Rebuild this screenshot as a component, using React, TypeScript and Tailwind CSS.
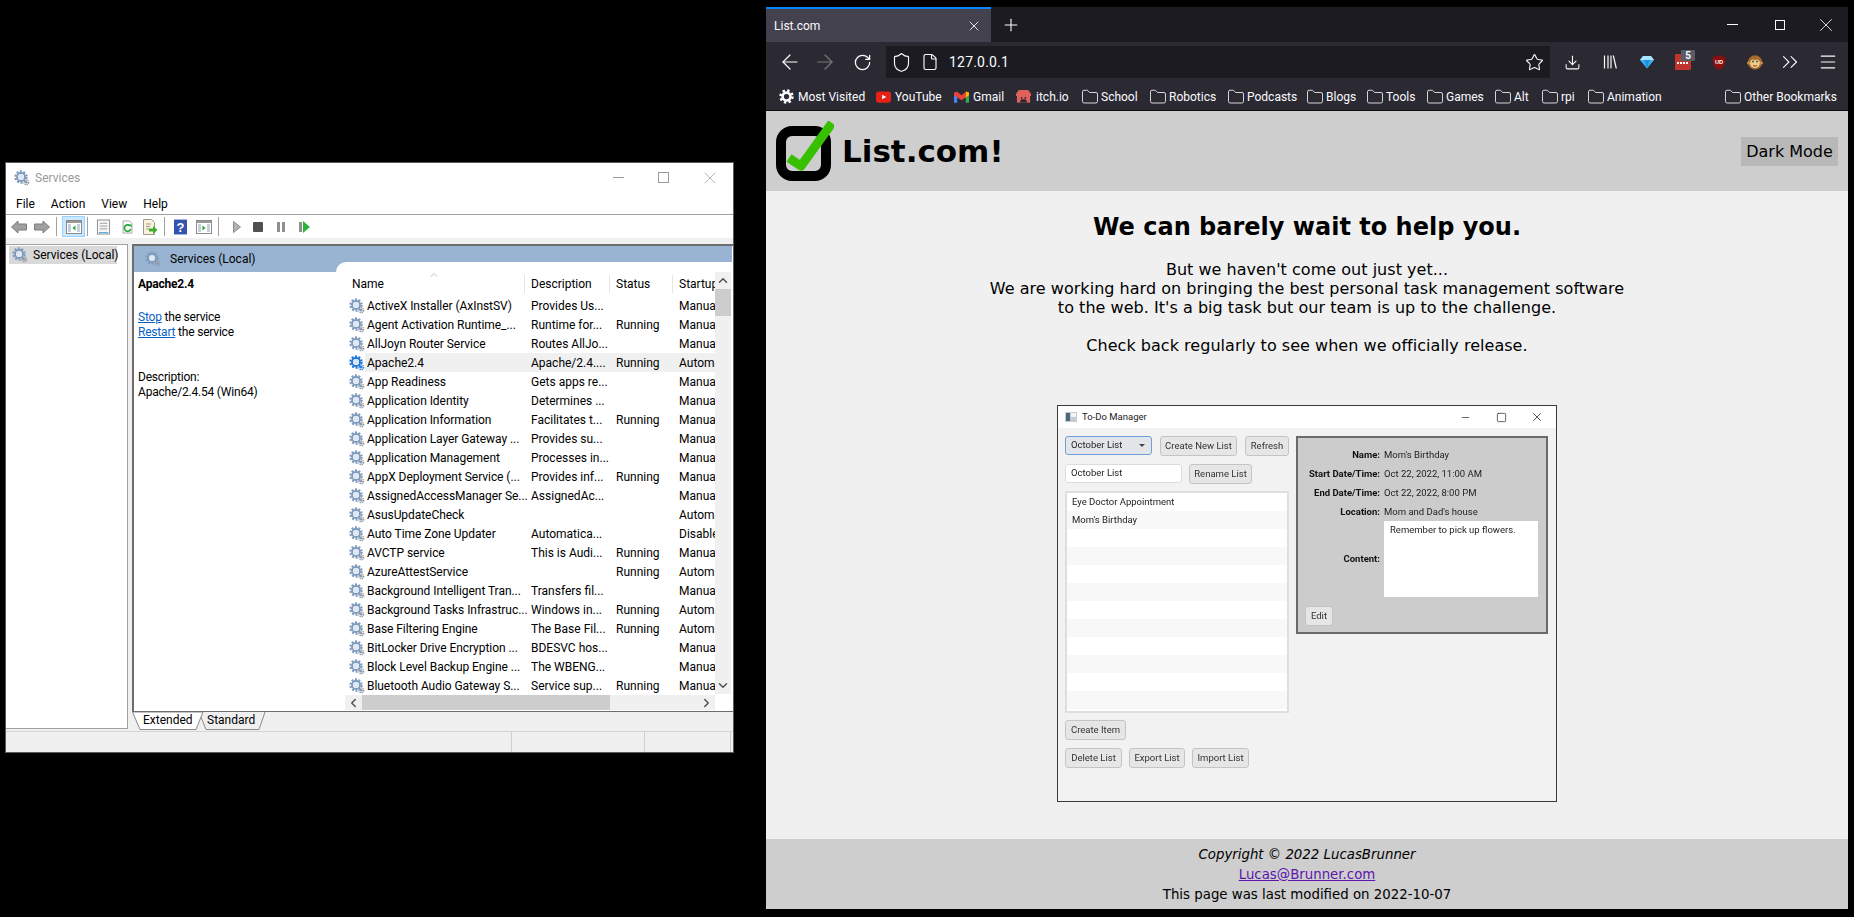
import {
  ArrowLeft,
  ArrowRight,
  ChevronDown,
  ChevronLeft,
  ChevronRight,
  ChevronUp,
  ChevronsRight,
  Download,
  File,
  Folder,
  Menu,
  Minus,
  Plus,
  RotateCw,
  Shield,
  Square,
  Star,
  X,
} from 'lucide-react'

const services = [
  ['ActiveX Installer (AxInstSV)', 'Provides Us...', '', 'Manual'],
  ['Agent Activation Runtime_...', 'Runtime for...', 'Running', 'Manual'],
  ['AllJoyn Router Service', 'Routes AllJo...', '', 'Manual'],
  ['Apache2.4', 'Apache/2.4....', 'Running', 'Automatic'],
  ['App Readiness', 'Gets apps re...', '', 'Manual'],
  ['Application Identity', 'Determines ...', '', 'Manual'],
  ['Application Information', 'Facilitates t...', 'Running', 'Manual'],
  ['Application Layer Gateway ...', 'Provides su...', '', 'Manual'],
  ['Application Management', 'Processes in...', '', 'Manual'],
  ['AppX Deployment Service (...', 'Provides inf...', 'Running', 'Manual'],
  ['AssignedAccessManager Se...', 'AssignedAc...', '', 'Manual'],
  ['AsusUpdateCheck', '', '', 'Automatic'],
  ['Auto Time Zone Updater', 'Automatica...', '', 'Disabled'],
  ['AVCTP service', 'This is Audi...', 'Running', 'Manual'],
  ['AzureAttestService', '', 'Running', 'Automatic'],
  ['Background Intelligent Tran...', 'Transfers fil...', '', 'Manual'],
  ['Background Tasks Infrastruc...', 'Windows in...', 'Running', 'Automatic'],
  ['Base Filtering Engine', 'The Base Fil...', 'Running', 'Automatic'],
  ['BitLocker Drive Encryption ...', 'BDESVC hos...', '', 'Manual'],
  ['Block Level Backup Engine ...', 'The WBENG...', '', 'Manual'],
  ['Bluetooth Audio Gateway S...', 'Service sup...', 'Running', 'Manual'],
]

const folders = [
  ['School', 'w-[68px]'],
  ['Robotics', 'w-[78px]'],
  ['Podcasts', 'w-[79px]'],
  ['Blogs', 'w-[60px]'],
  ['Tools', 'w-[60px]'],
  ['Games', 'w-[68px]'],
  ['Alt', 'w-[47px]'],
  ['rpi', 'w-[46px]'],
  ['Animation', 'w-[137px]'],
]

function Gear({ active = false, className = '' }: { active?: boolean; className?: string }) {
  const main = active ? '#1f74d6' : '#7e9abc'
  const small = active ? '#2f80dc' : '#8f9ba8'
  return (
    <svg viewBox="0 0 16 16" className={className}>
      <circle cx="7" cy="7" r="5.6" fill="none" stroke={main} strokeWidth="2.2" strokeDasharray="2 1.52" />
      <circle cx="7" cy="7" r="4" fill="none" stroke={main} strokeWidth="1.8" />
      <circle cx="7" cy="7" r="3" fill={active ? '#d6e6f8' : '#dfe8f2'} />
      <circle cx="12.3" cy="12.3" r="2.4" fill="none" stroke={small} strokeWidth="1.4" strokeDasharray="1.2 0.7" />
      <circle cx="12.3" cy="12.3" r="1.3" fill={small} />
    </svg>
  )
}

function MmcPaneIcon({ play = 'left' }: { play?: 'left' | 'right' }) {
  return (
    <svg viewBox="0 0 16 16" className="h-4 w-4">
      <rect x="0.5" y="1.5" width="15" height="13" fill="#fff" stroke="#8a8a8a" />
      <rect x="1" y="2" width="14" height="2" fill="#9a9a9a" />
      <path d="M2 6h3M2 8h3M2 10h3M2 12h3M11 6h3M11 8h3M11 10h3M11 12h3" stroke="#8fa0b3" />
      {play === 'left' ? <path d="M9.5 6.5v5l-3-2.5z" fill="#2aa53a" /> : <path d="M6.5 6.5v5l3-2.5z" fill="#2aa53a" />}
    </svg>
  )
}

function ServicesToolbar() {
  return (
    <div className="flex h-[23px] items-center bg-white pl-[5px]">
      <svg viewBox="0 0 16 14" className="h-[14px] w-[16px]"><path d="M0.5 7 7 1v3h8.5v6H7v3z" fill="#a0a0a0" stroke="#7c7c7c" /></svg>
      <svg viewBox="0 0 16 14" className="ml-[7px] h-[14px] w-[16px]"><path d="M15.5 7 9 1v3H0.5v6H9v3z" fill="#a0a0a0" stroke="#7c7c7c" /></svg>
      <div className="ml-[6px] h-[19px] w-px bg-[#a0a0a0]" />
      <div className="ml-[5px] flex h-[21px] w-[23px] items-center justify-center border border-[#99d1ff] bg-[#cce8ff]">
        <MmcPaneIcon />
      </div>
      <div className="ml-[2px] h-[19px] w-px bg-[#a0a0a0]" />
      <svg viewBox="0 0 16 16" className="ml-[8px] h-4 w-[15px]">
        <rect x="1.5" y="0.5" width="13" height="15" fill="#f6f6f6" stroke="#8a8a8a" />
        <path d="M4 4h8M4 7h8M4 10h8" stroke="#9a9a9a" />
        <path d="M3 14h10" stroke="#3aa0e0" />
      </svg>
      <svg viewBox="0 0 16 16" className="ml-[10px] h-4 w-[13px]">
        <path d="M2.5 0.5h8l3 3v12h-11z" fill="#fbfbfb" stroke="#9a9a9a" />
        <path d="M11 6.5a4 4 0 1 0 1 4" fill="none" stroke="#22a534" strokeWidth="2" />
        <path d="M9.5 5h3.5v3.5z" fill="#22a534" />
      </svg>
      <svg viewBox="0 0 16 16" className="ml-[8px] h-4 w-4">
        <path d="M1.5 0.5h8l3 3v12h-11z" fill="#fbf3d8" stroke="#9a9a9a" />
        <path d="M4 5h5M4 7.5h4M4 10h3" stroke="#9a9a9a" />
        <path d="M7 9.5h4v-2.5l4.5 4-4.5 4v-2.5h-4z" fill="#3fae2a" />
      </svg>
      <div className="ml-[6px] h-[19px] w-px bg-[#a0a0a0]" />
      <svg viewBox="0 0 14 16" className="ml-[9px] h-4 w-[13px]">
        <rect width="14" height="16" fill="#3554ad" />
        <text x="7" y="13" textAnchor="middle" fontSize="14" fontWeight="700" fill="#fff" fontFamily="Liberation Sans, sans-serif">?</text>
      </svg>
      <div className="ml-[9px]"><MmcPaneIcon play="right" /></div>
      <div className="ml-[6px] h-[19px] w-px bg-[#a0a0a0]" />
      <svg viewBox="0 0 8 12" className="ml-[14px] h-3 w-2"><path d="M0.5 0.5v11l7-5.5z" fill="#b4b4b4" stroke="#8c8c8c" /></svg>
      <div className="ml-[12px] h-[10px] w-[10px] rounded-[1px] bg-[#505050]" />
      <div className="ml-[14px] flex gap-[2px]">
        <div className="h-[10px] w-[3px] bg-[#8f8f8f]" />
        <div className="h-[10px] w-[3px] bg-[#8f8f8f]" />
      </div>
      <div className="ml-[14px] flex items-center gap-[1px]">
        <div className="h-[10px] w-[3px] bg-[#8f8f8f]" />
        <svg viewBox="0 0 7 12" className="h-3 w-[7px]"><path d="M0 0v12l7-6z" fill="#2cb43a" /></svg>
      </div>
    </div>
  )
}

function ServicesWindow() {
  return (
    <div className="absolute left-[5px] top-[162px] flex h-[591px] w-[729px] flex-col border border-[#5a5a5a] bg-[#f0f0f0] text-[12px] text-black [font-family:Roboto,sans-serif]">
      {/* title bar */}
      <div className="flex h-[32px] items-center bg-white pb-[3px] pl-[8px]">
        <Gear className="h-4 w-4" />
        <span className="ml-[5px] text-[#9a9a9a]">Services</span>
        <div className="ml-auto flex items-center pr-[13px] text-[#9a9a9a]">
          <div className="h-px w-[11px] bg-[#9a9a9a]" />
          <div className="ml-[34px] h-[11px] w-[11px] border border-[#9a9a9a]" />
          <X className="ml-[31px] h-[20px] w-[20px]" strokeWidth={0.9} />
        </div>
      </div>
      {/* menu */}
      <div className="flex h-[20px] items-center gap-[16px] border-b border-[#a0a0a0] bg-white pb-[1px] pl-[10px]">
        <span>File</span>
        <span>Action</span>
        <span>View</span>
        <span>Help</span>
      </div>
      <ServicesToolbar />
      <div className="flex min-h-0 flex-1 flex-col pt-[6px]">
        <div className="flex min-h-0 flex-1">
          {/* tree */}
          <div className="w-[122px] border-t border-r border-b border-[#a0a0a0] bg-white pl-[3px] pt-[1px]">
            <div className="flex h-[18px] w-[108px] items-center whitespace-nowrap bg-[#d9d9d9] pl-[3px]">
              <Gear className="h-4 w-4 shrink-0" />
              <span className="ml-[5px]">Services (Local)</span>
            </div>
          </div>
          {/* result pane */}
          <div className="ml-[4px] flex min-w-0 flex-1 flex-col">
            <div className="flex-1 border-t-2 border-l-2 border-[#6d6d6d] bg-white">
              <div className="mr-[1px] flex h-[26px] items-center bg-[#98b4d2] pl-[11px]">
                <Gear className="h-4 w-4" />
                <span className="ml-[9px]">Services (Local)</span>
              </div>
              <div className="flex">
                <div className="w-[202px] pl-[4px] tracking-[-0.2px]">
                  <div className="mt-[3px] font-bold leading-[19px]">Apache2.4</div>
                  <div className="mt-[16px] leading-[15px]">
                    <span className="text-[#0a5fc4] underline">Stop</span> the service
                  </div>
                  <div className="leading-[15px]">
                    <span className="text-[#0a5fc4] underline">Restart</span> the service
                  </div>
                  <div className="mt-[30px] leading-[15px]">Description:</div>
                  <div className="leading-[15px]">Apache/2.4.54 (Win64)</div>
                </div>
                {/* list view */}
                <div className="relative -mt-[10px] min-w-0 flex-1 rounded-tl-[10px] bg-white pl-[9px]">
                  <div className="flex">
                    <div className="w-[370px] overflow-hidden">
                      <div className="relative grid h-[34px] grid-cols-[179px_85px_63px_43px] items-end whitespace-nowrap pb-[3px]">
                        <ChevronUp className="absolute left-[81px] top-[7px] h-[12px] w-[16px] text-[#8a8a8a]" strokeWidth={1} />
                        <div className="pl-[7px]">Name</div>
                        <div className="border-l border-[#e5e5e5] pl-[6px]">Description</div>
                        <div className="border-l border-[#e5e5e5] pl-[6px]">Status</div>
                        <div className="overflow-hidden border-l border-[#e5e5e5] pl-[6px]">Startup Type</div>
                      </div>
                      {services.map((row, i) => (
                        <div key={row[0]} className="grid h-[19px] grid-cols-[179px_85px_63px_43px] items-center whitespace-nowrap">
                          <div className="flex items-center pl-[4px]">
                            <Gear active={i === 3} className="h-4 w-4 shrink-0" />
                            <span className={i === 3 ? 'flex h-[19px] flex-1 items-center bg-[#f0f0f0] pl-[2px]' : 'pl-[2px] tracking-[-0.05px]'}>{row[0]}</span>
                          </div>
                          <div className={i === 3 ? 'flex h-[19px] items-center bg-[#f0f0f0] pl-[7px]' : 'pl-[7px]'}>{row[1]}</div>
                          <div className={i === 3 ? 'flex h-[19px] items-center bg-[#f0f0f0] pl-[7px]' : 'pl-[7px]'}>{row[2]}</div>
                          <div className={i === 3 ? 'flex h-[19px] items-center overflow-hidden bg-[#f0f0f0] pl-[7px]' : 'overflow-hidden pl-[7px]'}>{row[3]}</div>
                        </div>
                      ))}
                    </div>
                    {/* vertical scrollbar */}
                    <div className="mt-[10px] flex h-[422px] w-[16px] flex-col items-center bg-[#f0f0f0]">
                      <ChevronUp className="h-[17px] w-[14px] text-[#505050]" strokeWidth={2.5} />
                      <div className="h-[27px] w-full bg-[#cdcdcd]" />
                      <ChevronDown className="mt-auto h-[17px] w-[14px] text-[#505050]" strokeWidth={2.5} />
                    </div>
                  </div>
                  {/* horizontal scrollbar */}
                  <div className="flex h-[15px] w-[370px] items-center bg-[#f0f0f0]">
                    <ChevronLeft className="h-[14px] w-[17px] text-[#505050]" strokeWidth={2.5} />
                    <div className="h-full w-[248px] bg-[#cdcdcd]" />
                    <ChevronRight className="ml-auto h-[14px] w-[17px] text-[#505050]" strokeWidth={2.5} />
                  </div>
                </div>
              </div>
            </div>
            {/* tabs */}
            <div className="relative flex h-[18px] items-center border-t border-[#6d6d6d] pb-[1px]">
              <svg viewBox="0 0 136 18" className="absolute left-0 top-0 h-[18px] w-[136px]">
                <path d="M0.5 0 8 17.5H64L71 0z" fill="#fff" stroke="#8a8a8a" />
                <path d="M69 5 74 17.5H127L133 0" fill="none" stroke="#8a8a8a" />
              </svg>
              <span className="relative ml-[11px] w-[64px]">Extended</span>
              <span className="relative">Standard</span>
            </div>
          </div>
        </div>
        {/* status bar */}
        <div className="mt-[2px] flex h-[21px] border-t border-[#d4d4d4]">
          <div className="w-[506px] border-r border-[#d0d0d0]" />
          <div className="w-[133px] border-r border-[#d0d0d0]" />
          <div className="w-[86px] border-r border-[#d0d0d0]" />
        </div>
      </div>
    </div>
  )
}

function BrowserToolbar() {
  return (
    <div className="flex h-[36px] items-start bg-[#2b2a33] pl-[12px] pt-[4px] text-[#fbfbfe]">
      <div className="flex h-[32px] items-center">
        <ArrowLeft className="h-[24px] w-[24px]" strokeWidth={1.2} />
        <ArrowRight className="ml-[11px] h-[24px] w-[24px] text-[#77767d]" strokeWidth={1.2} />
        <RotateCw className="ml-[16px] h-[19px] w-[19px]" strokeWidth={1.6} />
      </div>
      <div className="ml-[14px] flex h-[32px] w-[664px] items-center bg-[#1c1b22] pl-[5px]">
        <Shield className="h-[21px] w-[21px]" strokeWidth={1.3} />
        <File className="ml-[9px] h-[18px] w-[18px]" strokeWidth={1.5} />
        <span className="ml-[10px] text-[14px] tracking-[0.2px]">127.0.0.1</span>
        <Star className="ml-auto mr-[6px] h-[19px] w-[19px]" strokeWidth={1.4} />
      </div>
      <div className="flex h-[32px] items-center">
        <Download className="ml-[14px] h-[17px] w-[17px]" strokeWidth={1.5} />
        <svg viewBox="0 0 14 14" className="ml-[22px] h-[14px] w-[14px]" stroke="#fbfbfe" strokeWidth="1.2">
          <path d="M1.5 0.5v13M5 0.5v13M8 0.5v13M10.3 0.5l3 13" />
        </svg>
        {/* sapphire extension */}
        <svg viewBox="0 0 14 14" className="ml-[23px] h-[14px] w-[14px]">
          <path d="M3 1h8l3 4-7 8.5L0 5z" fill="#38b6f5" />
          <path d="M3 1h8l3 4H0z" fill="#a8e4ff" />
          <path d="M4 5h6l-3 8.5z" fill="#1d8fe0" />
        </svg>
        <div className="relative ml-[21px] h-[16px] w-[16px] rounded-[1px] bg-[#c0352b]">
          <div className="absolute left-[2px] top-[8px] flex gap-[1px]">
            <div className="h-[2px] w-[2px] bg-white" />
            <div className="h-[2px] w-[2px] bg-white" />
            <div className="h-[2px] w-[2px] bg-white" />
            <div className="h-[2px] w-[2px] bg-white" />
          </div>
          <div className="absolute -top-[4px] left-[6px] flex h-[11px] w-[14px] items-center justify-center rounded-[1px] bg-[#5b5b66] text-[10px] font-bold leading-none">5</div>
        </div>
        <svg viewBox="0 0 14 16" className="ml-[21px] h-[15px] w-[14px]">
          <path d="M7 0c2 1.3 4 2 7 2 0 7-1.5 11-7 14C1.5 13 0 9 0 2c3 0 5-.7 7-2z" fill="#8a0f0f" />
          <text x="7" y="10" textAnchor="middle" fontSize="6" fontWeight="700" fill="#fff" fontFamily="Liberation Sans, sans-serif">UD</text>
        </svg>
        {/* monkey */}
        <svg viewBox="0 0 16 16" className="ml-[21px] h-[16px] w-[16px]">
          <circle cx="8" cy="8.5" r="7.2" fill="#a56a2c" />
          <circle cx="1.6" cy="9" r="1.6" fill="#c98d4a" />
          <circle cx="14.4" cy="9" r="1.6" fill="#c98d4a" />
          <path d="M3.5 7c1-2 3.4-2 4.5-.8 1.1-1.2 3.5-1.2 4.5.8 1 2.5 0 7-4.5 7S2.5 9.500 3.5 7z" fill="#f1c98c" />
          <circle cx="6" cy="7.6" r="1" fill="#2e6b32" />
          <circle cx="10" cy="7.6" r="1" fill="#2e6b32" />
          <path d="M6 11.5c1.3.8 2.7.8 4 0" stroke="#7a4a1c" fill="none" />
        </svg>
        <ChevronsRight className="ml-[14px] h-[26px] w-[26px]" strokeWidth={1} />
        <Menu className="ml-[15px] h-[20px] w-[20px]" strokeWidth={1.4} />
      </div>
    </div>
  )
}

function BookmarksBar() {
  return (
    <div className="flex h-[33px] items-center whitespace-nowrap border-b border-[#0c0c0d] bg-[#2b2a33] pl-[13px] pt-[5px] text-[12px] text-[#fbfbfe]">
      <div className="flex w-[97px] items-center">
        <svg viewBox="0 0 16 16" className="h-[15px] w-[15px]" fill="none" stroke="#fbfbfe">
          <circle cx="8" cy="8" r="6.3" strokeWidth="2.8" strokeDasharray="2.5 2.45" />
          <circle cx="8" cy="8" r="4.2" strokeWidth="2.8" />
        </svg>
        <span className="ml-[4px]">Most Visited</span>
      </div>
      <div className="flex w-[78px] items-center">
        <svg viewBox="0 0 16 12" className="h-[12px] w-[15px]">
          <rect width="16" height="12" rx="3" fill="#e62117" />
          <path d="M6.5 3.5v5L11 6z" fill="#fff" />
        </svg>
        <span className="ml-[4px]">YouTube</span>
      </div>
      <div className="flex w-[62px] items-center">
        <svg viewBox="0 0 16 12" className="h-[12px] w-[15px]">
          <path d="M0 2v10h3.5V5z" fill="#4285f4" />
          <path d="M16 2v10h-3.5V5z" fill="#34a853" />
          <path d="M0 1.5 3 0l5 4 5-4 3 1.5V4l-8 5.5L0 4z" fill="#ea4335" />
          <path d="M13 0l3 1.5V4l-3.5 2.5z" fill="#fbbc04" />
        </svg>
        <span className="ml-[4px]">Gmail</span>
      </div>
      <div className="flex w-[66px] items-center">
        <svg viewBox="0 0 16 16" className="h-[15px] w-[15px]">
          <path d="M3 1h10l3 4v2.5H0V5z" fill="#e0605a" />
          <path d="M1 7h14v7.5H1z" fill="#e0605a" />
          <path d="M4.5 14.5v-2l1.500-1.500h4l1.500 1.500v2z" fill="#2b2a33" />
          <circle cx="6" cy="9.5" r="1" fill="#2b2a33" />
          <circle cx="10" cy="9.5" r="1" fill="#2b2a33" />
        </svg>
        <span className="ml-[5px]">itch.io</span>
      </div>
      {folders.map(([name, width]) => (
        <div key={name} className={`flex items-center ${width}`}>
          <Folder className="-ml-[1px] h-[18px] w-[18px]" strokeWidth={1.1} />
          <span className="ml-[2px]">{name}</span>
        </div>
      ))}
      <div className="flex items-center">
        <Folder className="-ml-[1px] h-[18px] w-[18px]" strokeWidth={1.1} />
        <span className="ml-[2px]">Other Bookmarks</span>
      </div>
    </div>
  )
}

function DesktopButton({ label, className = '' }: { label: string; className?: string }) {
  return (
    <div className={`flex h-[20px] items-center justify-center rounded-[3px] border border-[#c4c4c4] bg-[#e6e6e6] text-[#333] ${className}`}>
      {label}
    </div>
  )
}

function DetailRow({ label, value }: { label: string; value: string }) {
  return (
    <div className="flex h-[19px] items-center">
      <div className="w-[75px] text-right font-bold text-[#111]">{label}</div>
      <div className="ml-[4px] text-[#222]">{value}</div>
    </div>
  )
}

function TodoScreenshot() {
  return (
    <div className="mt-[50px] h-[397px] w-[500px] border border-[#3a3a3a] bg-[#f2f2f2] text-[9.5px] text-[#222] [font-family:Roboto,sans-serif]">
      <div className="flex h-full flex-col blur-[0.3px]">
        <div className="flex h-[22px] items-center bg-white pl-[7px]">
          <svg viewBox="0 0 12 10" className="h-[10px] w-[12px]">
            <rect width="12" height="10" fill="#c8ccd0" />
            <rect x="1" y="1" width="4" height="8" fill="#4a6a7a" />
            <rect x="6" y="1" width="5" height="4" fill="#f4f4f4" />
          </svg>
          <span className="ml-[5px] text-[#222]">To-Do Manager</span>
          <Minus className="ml-auto h-[11px] w-[11px] text-[#222]" strokeWidth={1.5} />
          <Square className="ml-[25px] h-[11px] w-[11px] text-[#222]" strokeWidth={1.5} />
          <X className="ml-[23px] mr-[12px] h-[14px] w-[14px] text-[#222]" strokeWidth={1.3} />
        </div>
        <div className="flex flex-1 pl-[7px] pt-[8px]">
          <div className="w-[224px]">
            <div className="flex gap-[8px]">
              <div className="flex h-[19px] w-[87px] items-center justify-between rounded-[3px] border border-[#6f9fd8] bg-[#e2e6ea] pl-[5px] pr-[6px]">
                <span>October List</span>
                <svg viewBox="0 0 6 3" className="h-[3px] w-[6px]"><path d="M0 0h6L3 3z" fill="#444" /></svg>
              </div>
              <DesktopButton label="Create New List" className="h-[19px] w-[77px]" />
              <DesktopButton label="Refresh" className="h-[19px] w-[44px]" />
            </div>
            <div className="mt-[8px] flex gap-[7px]">
              <div className="flex h-[19px] w-[117px] items-center rounded-[3px] border border-[#dcdcdc] bg-white pl-[5px]">October List</div>
              <DesktopButton label="Rename List" className="w-[63px]" />
            </div>
            <div className="mt-[7px] h-[222px] border-2 border-[#dedede] bg-white">
              <div className="flex h-[18px] items-center pl-[5px]">Eye Doctor Appointment</div>
              <div className="flex h-[18px] items-center bg-[#f8f8f8] pl-[5px]">Mom's Birthday</div>
              <div className="h-[18px]" />
              <div className="h-[18px] bg-[#f8f8f8]" />
              <div className="h-[18px]" />
              <div className="h-[18px] bg-[#f8f8f8]" />
              <div className="h-[18px]" />
              <div className="h-[18px] bg-[#f8f8f8]" />
              <div className="h-[18px]" />
              <div className="h-[18px] bg-[#f8f8f8]" />
              <div className="h-[18px]" />
              <div className="h-[18px] bg-[#f8f8f8]" />
            </div>
            <DesktopButton label="Create Item" className="mt-[7px] w-[61px]" />
            <div className="mt-[8px] flex gap-[7px]">
              <DesktopButton label="Delete List" className="w-[57px]" />
              <DesktopButton label="Export List" className="w-[56px]" />
              <DesktopButton label="Import List" className="w-[57px]" />
            </div>
          </div>
          <div className="ml-[7px] h-[198px] w-[252px] border-2 border-[#6a6a6a] bg-[#cccccc] pl-[7px] pr-[8px] pt-[8px]">
            <DetailRow label="Name:" value="Mom's Birthday" />
            <DetailRow label="Start Date/Time:" value="Oct 22, 2022, 11:00 AM" />
            <DetailRow label="End Date/Time:" value="Oct 22, 2022, 8:00 PM" />
            <DetailRow label="Location:" value="Mom and Dad's house" />
            <div className="-mt-[1px] flex items-center">
              <div className="w-[75px] text-right font-bold text-[#111]">Content:</div>
              <div className="ml-[4px] h-[76px] w-[154px] bg-white pl-[6px] pt-[2px]">Remember to pick up flowers.</div>
            </div>
            <DesktopButton label="Edit" className="mt-[9px] h-[20px] w-[28px]" />
          </div>
        </div>
      </div>
    </div>
  )
}

function BrowserWindow() {
  return (
    <div className="absolute left-[766px] top-[7px] flex h-[902px] w-[1082px] flex-col bg-[#f0f0f0] [font-family:Roboto,sans-serif]">
      {/* tab strip */}
      <div className="flex h-[35px] items-center bg-[#1c1b22] text-[#fbfbfe]">
        <div className="flex h-full w-[225px] items-center border-t-2 border-[#0a84ff] bg-[#42414d] pl-[8px] text-[12px]">
          <span>List.com</span>
          <X className="ml-auto mr-[9px] h-[16px] w-[16px]" strokeWidth={1.3} />
        </div>
        <Plus className="ml-[10px] h-[20px] w-[20px]" strokeWidth={1.3} />
        <div className="ml-auto h-px w-[11px] bg-[#fbfbfe]" />
        <div className="ml-[37px] h-[10px] w-[10px] border border-[#fbfbfe]" />
        <X className="ml-[30px] mr-[11px] h-[22px] w-[22px]" strokeWidth={0.9} />
      </div>
      <BrowserToolbar />
      <BookmarksBar />
      {/* page */}
      <div className="flex min-h-0 flex-1 flex-col text-black [font-family:'DejaVu_Sans',sans-serif]">
        <div className="flex h-[80px] items-center justify-between bg-[#cecece] pl-[10px] pr-[10px]">
          <div className="flex items-center">
            <svg viewBox="0 0 58 60" className="h-[60px] w-[58px]">
              <rect x="5" y="10" width="45" height="45" rx="11" fill="none" stroke="#000" strokeWidth="10" />
              <path d="M13 37 25 45 56 2" fill="none" stroke="#36c000" strokeWidth="9" strokeLinejoin="round" />
            </svg>
            <span className="ml-[8px] mt-[1px] text-[31px] font-bold leading-none">List.com!</span>
          </div>
          <div className="mt-[1px] flex h-[29px] w-[97px] items-center justify-center bg-[#b8b8b8] text-[16px]">Dark Mode</div>
        </div>
        <div className="flex flex-1 flex-col items-center">
          <h1 className="mt-[22px] text-[24px] font-bold leading-[28px]">We can barely wait to help you.</h1>
          <div className="mt-[19px] w-[640px] text-center text-[16px] leading-[19px] tracking-[0.03px]">
            <p>But we haven't come out just yet...</p>
            <p>We are working hard on bringing the best personal task management software to the web. It's a big task but our team is up to the challenge.</p>
            <p className="mt-[19px]">Check back regularly to see when we officially release.</p>
          </div>
          <TodoScreenshot />
        </div>
        <div className="flex h-[70px] flex-col items-center bg-[#cecece] pt-[6px] text-[13.33px] leading-[20px]">
          <div className="italic">Copyright © 2022 LucasBrunner</div>
          <div className="text-[#5c14ad] underline">Lucas@Brunner.com</div>
          <div>This page was last modified on 2022-10-07</div>
        </div>
      </div>
    </div>
  )
}

export default function App() {
  return (
    <div className="relative h-[917px] w-[1854px] overflow-hidden bg-black">
      <ServicesWindow />
      <BrowserWindow />
    </div>
  )
}
